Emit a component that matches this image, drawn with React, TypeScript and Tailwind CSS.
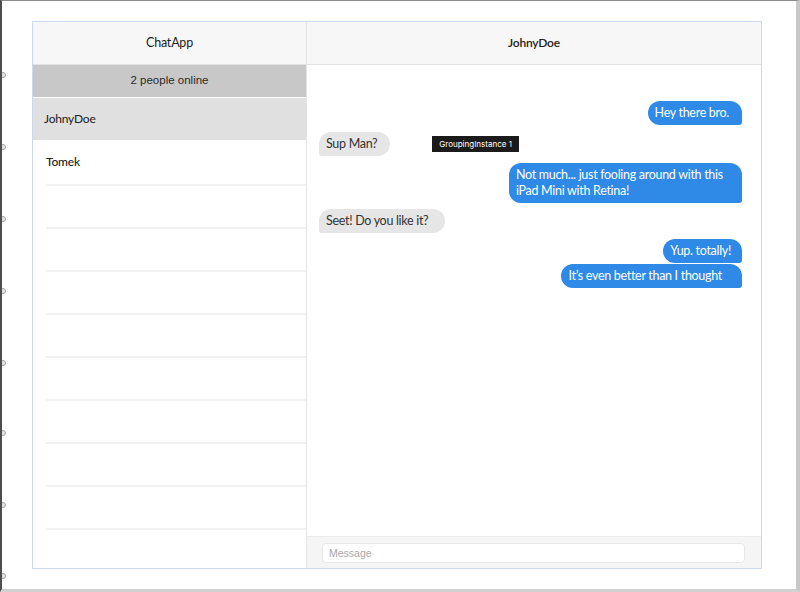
import React from "react"

type Msg = { text: string; mine: boolean; gap: number; pr: number; tip?: boolean }

const messages: Msg[] = [
  { text: "Hey there bro.", mine: true, gap: 0, pr: 13 },
  { text: "Sup Man?", mine: false, gap: 7, pr: 13, tip: true },
  { text: "Not much... just fooling around with this iPad Mini with Retina!", mine: true, gap: 7, pr: 12 },
  { text: "Seet! Do you like it?", mine: false, gap: 6, pr: 17 },
  { text: "Yup. totally!", mine: true, gap: 6, pr: 11 },
  { text: "It\u2019s even better than I thought", mine: true, gap: 1, pr: 20 },
]

const markers = [75, 147, 219, 291, 363, 433, 505, 576]

const Bubble = ({ m }: { m: Msg }) => (
  <div
    className={`flex items-center ${m.mine ? "justify-end" : "justify-start"}`}
    style={{ marginTop: m.gap }}
  >
    <div
      className={`max-w-[233px] pl-[7px] py-[4px] text-[12.5px] leading-[16px] tracking-[-0.3px] ${
        m.mine
          ? "bg-[#2e8ae6] text-white rounded-[12px] rounded-br-[3px]"
          : "bg-[#e6e6e6] text-[#333] rounded-[12px] rounded-bl-[3px]"
      }`}
      style={{ paddingRight: m.pr }}
    >
      {m.text}
    </div>
    {m.tip && (
      <div className="ml-[42px] bg-[#1b1b1b] text-white text-[8px] leading-[16px] px-[7px] font-['Inter',sans-serif]">
        GroupingInstance 1
      </div>
    )}
  </div>
)

export default function App() {
  return (
    <div className="relative w-[800px] h-[592px] bg-white overflow-hidden border-t border-t-[#8c8c8c] border-l-2 border-l-[#4d4d4d] border-b-[3px] border-b-[#d2d2d2] border-r-[4px] border-r-[#c8c8c8] font-['Lato',sans-serif]">
      {markers.map((y) => (
        <div
          key={y}
          className="absolute left-[-2px] w-[6px] h-[6px] rounded-full border border-[#a8a8a8] bg-[#e2e2e2]"
          style={{ top: y - 4 }}
        />
      ))}
      <div className="absolute right-[-4px] top-[10px] w-[4px] h-[55px] bg-[#7a7a7a]" />
      <div className="absolute bottom-[-3px] left-[98px] w-[132px] h-[3px] bg-[#9a9a9a]" />

      <div className="mt-[20px] ml-[30px] w-[730px] h-[548px] border border-[#cdd9ee] flex">
        {/* sidebar */}
        <div className="w-[274px] flex flex-col border-r border-[#e4e4e4]">
          <div className="h-[43px] shrink-0 bg-[#f7f7f7] border-b border-[#e2e2e2] flex items-center justify-center text-[12.5px] tracking-[-0.2px] text-[#222]">
            ChatApp
          </div>
          <div className="h-[32px] shrink-0 bg-[#c8c8c8] flex items-center justify-center text-[11.5px] text-[#2a2a2a] font-['Liberation_Sans',sans-serif]">
            2 people online
          </div>
          <div className="h-[42px] shrink-0 mt-px bg-[#e0e0e0] flex items-center pl-[11px] text-[12px] tracking-[-0.2px] text-[#222]">
            JohnyDoe
          </div>
          <div className="h-[46px] shrink-0 ml-[13px] border-b-2 border-[#f2f2f2] flex items-center text-[12px] tracking-[-0.2px] font-medium text-[#222]">
            Tomek
          </div>
          {Array.from({ length: 8 }).map((_, i) => (
            <div key={i} className="h-[43px] shrink-0 ml-[13px] border-b-2 border-[#f2f2f2]" />
          ))}
        </div>

        {/* chat */}
        <div className="flex-1 flex flex-col">
          <div className="h-[43px] shrink-0 bg-[#f7f7f7] border-b border-[#e2e2e2] flex items-center justify-center text-[12px] tracking-[-0.2px] font-semibold text-[#222]">
            JohnyDoe
          </div>
          <div className="flex-1 pt-[36px] pl-[12px] pr-[19px] flex flex-col">
            {messages.map((m, i) => (
              <Bubble key={i} m={m} />
            ))}
          </div>
          <div className="h-[32px] shrink-0 bg-[#f5f5f5] border-t border-[#ececec] pl-[15px] pr-[16px] flex items-center">
            <input
              placeholder="Message"
              className="w-full h-[20px] rounded-[4px] border border-[#e8e8e8] bg-white px-[6px] text-[10.5px] font-['Liberation_Sans',sans-serif] placeholder:text-[#a8a8a8] outline-none"
            />
          </div>
        </div>
      </div>
    </div>
  )
}
